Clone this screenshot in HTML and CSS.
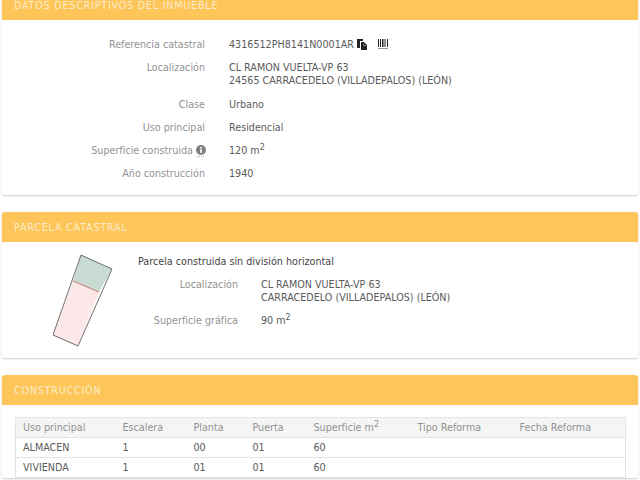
FILE: index.html
```html
<!DOCTYPE html>
<html lang="es">
<head>
    <meta charset="UTF-8">
    <title>Consulta descriptiva</title>
    <link rel="stylesheet" href="styles.css">
</head>
<body>
<div class="page">

    <!-- Datos descriptivos -->
    <section class="panel panel-datos">
        <h2 class="panel-title">DATOS DESCRIPTIVOS DEL INMUEBLE</h2>
        <div class="fields fields-datos">
            <div class="label">Referencia catastral</div>
            <div class="value ref">
                <span>4316512PH8141N0001AR</span>
                <svg class="icon-copy" width="10" height="11" viewBox="0 0 10 11">
                    <path fill="#222" d="M0 0h6v2H3v7H0z"/>
                    <path fill="#222" d="M4 3h3l3 3v5H4zM5 4v6h4V6.500H6.500V4z"/>
                    <path fill="#222" d="M5 4h1.500v3H9v3H5z"/>
                </svg>
                <svg class="icon-barcode" width="10" height="11" viewBox="0 0 10 11">
                    <path fill="#222" d="M0 0h1v8H0zM2 0h1v8H2zM4 0h1.500v8H4zM6.500 0h1v8h-1zM9 0h1v8H9z"/>
                    <path fill="#999" d="M0 9h10v1H0z"/>
                </svg>
            </div>

            <div class="label">Localización</div>
            <div class="value address">CL RAMON VUELTA-VP 63<br>24565 CARRACEDELO (VILLADEPALOS) (LEÓN)</div>

            <div class="label">Clase</div>
            <div class="value">Urbano</div>

            <div class="label">Uso principal</div>
            <div class="value">Residencial</div>

            <div class="label">Superficie construida
                <svg class="icon-info" width="10" height="12" viewBox="0 0 10 12">
                    <circle cx="5" cy="5" r="5" fill="#808080"/>
                    <path fill="#fff" d="M4.200 2h1.600v1.400H4.200zM4.200 4.200h1.600V8H4.200z"/>
                    <path fill="#aaa" d="M1 11h1v1H1zM3 11h1v1H3zM5 11h1v1H5zM7 11h1v1H7z"/>
                </svg>
            </div>
            <div class="value">120 m<sup>2</sup></div>

            <div class="label">Año construcción</div>
            <div class="value">1940</div>
        </div>
    </section>

    <!-- Parcela -->
    <section class="panel panel-parcela">
        <h2 class="panel-title">PARCELA CATASTRAL</h2>
        <div class="parcela-body">
            <svg class="plano" width="62" height="94" viewBox="0 0 62 94">
                <polygon points="28,1 59,15 46,38 20,27" fill="#c8dcd4"/>
                <polygon points="20,27 46,38 25,92 0,81" fill="#fce8e8"/>
                <polygon points="28,1 59,15 25,92 0,81" fill="none" stroke="#333" stroke-width="0.700"/>
                <line x1="20" y1="27" x2="46" y2="38" stroke="#b5483f" stroke-width="0.700"/>
            </svg>
            <div class="parcela-info">
                <div class="parcela-desc">Parcela construida sin división horizontal</div>
                <div class="fields fields-parcela">
                    <div class="label">Localización</div>
                    <div class="value">CL RAMON VUELTA-VP 63<br>CARRACEDELO (VILLADEPALOS) (LEÓN)</div>
                    <div class="label">Superficie gráfica</div>
                    <div class="value">90 m<sup>2</sup></div>
                </div>
            </div>
        </div>
    </section>

    <!-- Construccion -->
    <section class="panel">
        <h2 class="panel-title">CONSTRUCCIÓN</h2>
        <div class="tabla-wrap">
            <table class="tabla">
                <thead>
                    <tr>
                        <th class="col-uso">Uso principal</th>
                        <th class="col-esc">Escalera</th>
                        <th class="col-pla">Planta</th>
                        <th class="col-pue">Puerta</th>
                        <th class="col-sup">Superficie m<sup>2</sup></th>
                        <th class="col-tip">Tipo Reforma</th>
                        <th>Fecha Reforma</th>
                    </tr>
                </thead>
                <tbody>
                    <tr><td>ALMACEN</td><td>1</td><td>00</td><td>01</td><td>60</td><td></td><td></td></tr>
                    <tr><td>VIVIENDA</td><td>1</td><td>01</td><td>01</td><td>60</td><td></td><td></td></tr>
                </tbody>
            </table>
        </div>
    </section>

</div>
</body>
</html>
```

FILE: styles.css
```css
html, body {
    margin: 0;
    padding: 0;
    height: 480px;
    overflow: hidden;
    background-color: #fff;
}

body {
    font-family: "DejaVu Sans", Verdana, sans-serif;
    font-size: 9.6px;
    color: #555;
}

.page {
    margin: -10px 2px 0 2px;
}

.panel {
    background: #fff;
    border-radius: 3px;
    box-shadow: 0 1px 2px rgba(0, 0, 0, 0.2);
    margin-bottom: 17px;
}

.panel-title {
    margin: 0;
    height: 30px;
    line-height: 31px;
    padding-left: 12px;
    background-color: #fec558;
    border-radius: 3px 3px 0 0;
    color: #fdeccb;
    font-size: 9.6px;
    font-weight: normal;
    letter-spacing: 0.78px;
}

.fields {
    display: grid;
    align-items: start;
    line-height: 13px;
}

.fields-datos {
    grid-template-columns: 203px 1fr;
    column-gap: 24px;
    row-gap: 10px;
    padding: 18px 0 15px;
}

.label {
    text-align: right;
    color: #929292;
}

.value {
    color: #5a5a5a;
}

.address {
    margin-bottom: 1px;
}

sup {
    font-size: 8px;
    line-height: 0;
}

.ref {
    display: flex;
    align-items: center;
}

.icon-copy {
    margin-left: 3px;
}

.icon-barcode {
    margin-left: 11px;
}

.icon-info {
    vertical-align: -3px;
    margin-right: -1px;
}

.parcela-body {
    display: flex;
    height: 116px;
    box-sizing: border-box;
    padding-top: 13px;
}

.plano {
    margin-left: 51px;
    margin-top: -1px;
}

.parcela-info {
    margin-left: 23px;
}

.parcela-desc {
    line-height: 13px;
    color: #444;
}

.fields-parcela {
    grid-template-columns: 100px 1fr;
    column-gap: 23px;
    row-gap: 10px;
    margin-top: 10px;
}

.tabla-wrap {
    padding: 12px 12px 0 13px;
}

.tabla {
    width: 100%;
    border-collapse: collapse;
    table-layout: fixed;
    border: 1px solid #e4e4e4;
}

.tabla th, .tabla td {
    height: 20px;
    box-sizing: border-box;
    padding: 0 7px;
    text-align: left;
    font-weight: normal;
    border-bottom: 1px solid #e4e4e4;
    color: #5a5a5a;
}

.tabla th {
    background-color: #f5f5f5;
    color: #929292;
}

.col-uso { width: 100px; }
.col-esc { width: 71px; }
.col-pla { width: 59px; }
.col-pue { width: 61px; }
.col-sup { width: 104px; }
.col-tip { width: 102px; }
```
